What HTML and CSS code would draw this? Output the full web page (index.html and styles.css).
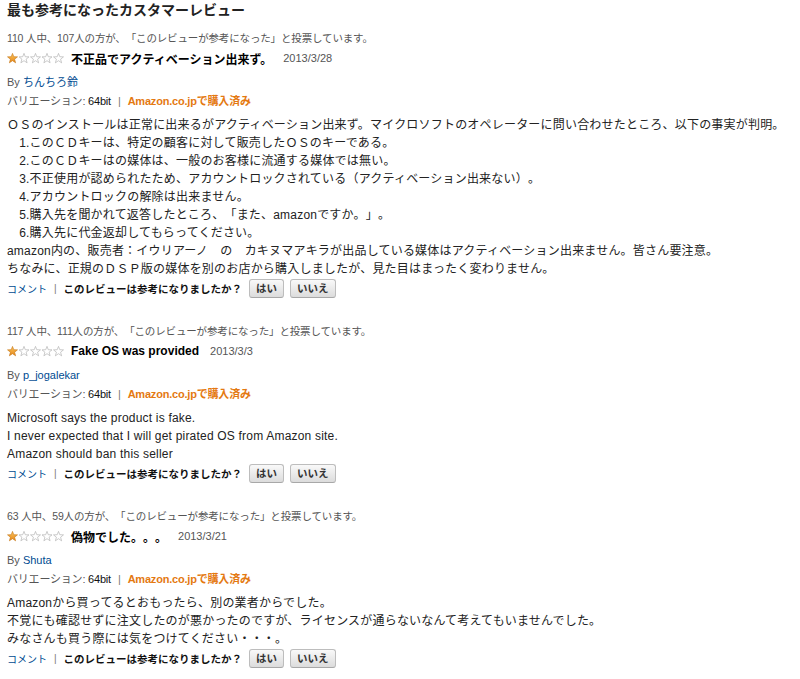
FILE: index.html
```html
<!DOCTYPE html>
<html>
<head>
<meta charset="utf-8">
<link rel="stylesheet" href="styles.css">
</head>
<body>
<svg class="defs" width="0" height="0">
  <defs>
    <linearGradient id="starFill" x1="0" y1="0" x2="0" y2="1">
      <stop offset="0" stop-color="#fcc55a"/>
      <stop offset="1" stop-color="#e5861a"/>
    </linearGradient>
    <path id="star" d="M5.5 0.4 L6.79 3.72 L10.5 3.86 L7.59 6.18 L8.6 9.8 L5.5 7.7 L2.4 9.8 L3.41 6.18 L0.5 3.86 L4.21 3.72 Z"/>
  </defs>
</svg>

<div id="Reviews">
  <h2 class="heading">最も参考になったカスタマーレビュー</h2>

  <div class="review">
    <div class="votes">110 人中、107人の方が、「このレビューが参考になった」と投票しています。</div>
    <div class="head">
      <svg class="stars" width="58" height="11" viewBox="0 0 58 11">
        <use href="#star" class="on"/>
        <use href="#star" class="off" x="11.5"/>
        <use href="#star" class="off" x="23"/>
        <use href="#star" class="off" x="34.5"/>
        <use href="#star" class="off" x="46"/>
      </svg>
      <b class="title">不正品でアクティベーション出来ず。</b>
      <span class="date">2013/3/28</span>
    </div>
    <div class="by">By <a class="link">ちんちろ鈴</a></div>
    <div class="variation">バリエーション: <span class="bit">64bit</span><span class="sep">|</span><span class="purchased">Amazon.co.jpで購入済み</span></div>
    <div class="text">
      ＯＳのインストールは正常に出来るがアクティベーション出来ず。マイクロソフトのオペレーターに問い合わせたところ、以下の事実が判明。<br>
      　1.このＣＤキーは、特定の顧客に対して販売したＯＳのキーである。<br>
      　2.このＣＤキーはの媒体は、一般のお客様に流通する媒体では無い。<br>
      　3.不正使用が認められたため、アカウントロックされている（アクティベーション出来ない）。<br>
      　4.アカウントロックの解除は出来ません。<br>
      　5.購入先を聞かれて返答したところ、「また、amazonですか。」。<br>
      　6.購入先に代金返却してもらってください。<br>
      amazon内の、販売者：イウリアーノ　の　カキヌマアキラが出品している媒体はアクティベーション出来ません。皆さん要注意。<br>
      ちなみに、正規のＤＳＰ版の媒体を別のお店から購入しましたが、見た目はまったく変わりません。
    </div>
    <div class="actions">
      <a class="link">コメント</a><span class="sep">|</span><b class="ask">このレビューは参考になりましたか？</b>
      <span class="button">はい</span><span class="button">いいえ</span>
    </div>
  </div>

  <div class="review">
    <div class="votes">117 人中、111人の方が、「このレビューが参考になった」と投票しています。</div>
    <div class="head">
      <svg class="stars" width="58" height="11" viewBox="0 0 58 11">
        <use href="#star" class="on"/>
        <use href="#star" class="off" x="11.5"/>
        <use href="#star" class="off" x="23"/>
        <use href="#star" class="off" x="34.5"/>
        <use href="#star" class="off" x="46"/>
      </svg>
      <b class="title">Fake OS was provided</b>
      <span class="date">2013/3/3</span>
    </div>
    <div class="by">By <a class="link">p_jogalekar</a></div>
    <div class="variation">バリエーション: <span class="bit">64bit</span><span class="sep">|</span><span class="purchased">Amazon.co.jpで購入済み</span></div>
    <div class="text">
      Microsoft says the product is fake.<br>
      I never expected that I will get pirated OS from Amazon site.<br>
      Amazon should ban this seller
    </div>
    <div class="actions">
      <a class="link">コメント</a><span class="sep">|</span><b class="ask">このレビューは参考になりましたか？</b>
      <span class="button">はい</span><span class="button">いいえ</span>
    </div>
  </div>

  <div class="review">
    <div class="votes">63 人中、59人の方が、「このレビューが参考になった」と投票しています。</div>
    <div class="head">
      <svg class="stars" width="58" height="11" viewBox="0 0 58 11">
        <use href="#star" class="on"/>
        <use href="#star" class="off" x="11.5"/>
        <use href="#star" class="off" x="23"/>
        <use href="#star" class="off" x="34.5"/>
        <use href="#star" class="off" x="46"/>
      </svg>
      <b class="title">偽物でした。。。</b>
      <span class="date">2013/3/21</span>
    </div>
    <div class="by">By <a class="link">Shuta</a></div>
    <div class="variation">バリエーション: <span class="bit">64bit</span><span class="sep">|</span><span class="purchased">Amazon.co.jpで購入済み</span></div>
    <div class="text">
      Amazonから買ってるとおもったら、別の業者からでした。<br>
      不覚にも確認せずに注文したのが悪かったのですが、ライセンスが通らないなんて考えてもいませんでした。<br>
      みなさんも買う際には気をつけてください・・・。
    </div>
    <div class="actions">
      <a class="link">コメント</a><span class="sep">|</span><b class="ask">このレビューは参考になりましたか？</b>
      <span class="button">はい</span><span class="button">いいえ</span>
    </div>
  </div>
</div>
</body>
</html>
```

FILE: styles.css
```css
html, body
{
  margin: 0;
  padding: 0;
  background-color: #ffffff;
  font-family: "Liberation Sans", "Noto Sans CJK JP", sans-serif;
  color: #222222;
  text-spacing-trim: space-all;
}

.defs
{
  position: absolute;
  width: 0;
  height: 0;
}

#Reviews
{
  padding: 0 4px 0 7px;
}

.heading
{
  margin: 0;
  font-size: 14px;
  line-height: 20px;
  font-weight: bold;
  color: #222222;
}

.review
{
  margin-top: 25px;
}

.review:first-of-type
{
  margin-top: 10px;
}

.votes
{
  font-size: 10.5px;
  line-height: 16px;
  letter-spacing: -0.15px;
  color: #555555;
}

.head
{
  display: flex;
  align-items: center;
  height: 20px;
  margin-top: 2px;
}

.stars
{
  display: block;
  margin-right: 6px;
}

.stars .on
{
  fill: url(#starFill);
  stroke: #c57614;
  stroke-width: 0.6;
}

.stars .off
{
  fill: #ffffff;
  stroke: #b5b5b5;
  stroke-width: 0.7;
}

.title
{
  font-size: 12px;
  font-weight: bold;
  color: #000000;
}

.date
{
  margin-left: 11px;
  font-size: 11px;
  color: #555555;
}

.by,
.variation
{
  font-size: 11px;
  line-height: 16px;
  color: #555555;
}

.by
{
  margin-top: 6px;
}

.variation
{
  margin-top: 3px;
  letter-spacing: -0.2px;
}

.link
{
  color: #004b91;
  text-decoration: none;
}

.bit
{
  color: #111111;
}

.sep
{
  margin: 0 7px;
  color: #777777;
}

.purchased
{
  font-weight: bold;
  color: #e47911;
}

.text
{
  margin-top: 7px;
  font-size: 12px;
  line-height: 18px;
  letter-spacing: 0.2px;
  color: #222222;
}

.actions
{
  display: flex;
  align-items: center;
  height: 20px;
  font-size: 10px;
}

.actions .sep
{
  margin: 0 7px;
}

.ask
{
  font-size: 10.5px;
  color: #111111;
}

.button
{
  display: inline-block;
  margin-left: 7px;
  padding: 0 6px;
  height: 17px;
  line-height: 17px;
  border: 1px solid #bdbdbd;
  border-bottom-color: #a8a8a8;
  border-radius: 3px;
  background: linear-gradient(#f9f9f9, #dcdcdc);
  font-size: 10.5px;
  font-weight: bold;
  color: #333333;
}

.button + .button
{
  margin-left: 6px;
}
```
